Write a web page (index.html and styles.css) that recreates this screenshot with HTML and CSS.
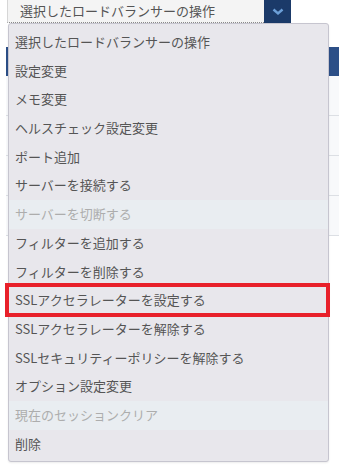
FILE: index.html
```html
<!DOCTYPE html>
<html lang="ja">
<head>
    <meta charset="UTF-8">
    <meta name="viewport" content="width=device-width, initial-scale=1.0">
    <title>ロードバランサーの操作</title>
    <link rel="stylesheet" href="styles.css">
</head>
<body>

    <div class="page">
        <div class="select-row">
            <div class="select-box">選択したロードバランサーの操作</div>
            <div class="select-btn">
                <svg width="12" height="8" viewBox="0 0 12 8">
                    <polyline points="1.5,1.5 6,5.5 10.5,1.5" fill="none" stroke="#6c9fd8" stroke-width="2.4"/>
                </svg>
            </div>
        </div>

        <div class="table">
            <div class="table-head"></div>
            <div class="table-row"></div>
            <div class="table-row"></div>
            <div class="table-row"></div>
            <div class="table-row"></div>
        </div>
    </div>

    <ul class="dropdown">
        <li class="item">選択したロードバランサーの操作</li>
        <li class="item">設定変更</li>
        <li class="item">メモ変更</li>
        <li class="item">ヘルスチェック設定変更</li>
        <li class="item">ポート追加</li>
        <li class="item">サーバーを接続する</li>
        <li class="item disabled">サーバーを切断する</li>
        <li class="item">フィルターを追加する</li>
        <li class="item">フィルターを削除する</li>
        <li class="item">SSLアクセラレーターを設定する</li>
        <li class="item">SSLアクセラレーターを解除する</li>
        <li class="item">SSLセキュリティーポリシーを解除する</li>
        <li class="item">オプション設定変更</li>
        <li class="item disabled">現在のセッションクリア</li>
        <li class="item">削除</li>
    </ul>

    <div class="highlight"></div>

</body>
</html>
```

FILE: styles.css
```css
* {
    box-sizing: border-box;
    margin: 0;
    padding: 0;
}
body {
    font-family: "Noto Sans CJK JP", "Noto Sans", sans-serif;
    font-size: 13px;
    color: #555;
    background-color: #ffffff;
    position: relative;
    width: 339px;
    height: 470px;
    overflow: hidden;
}
.page {
    padding-left: 6px;
}
.select-row {
    display: flex;
    height: 23px;
}
.select-box {
    width: 257px;
    margin-left: 1px;
    padding-left: 12px;
    background-color: #f4f4f4;
    border-left: 1px solid #d6d6d6;
    border-bottom: 1px dotted #8a8a8a;
    line-height: 21px;
    color: #555;
    white-space: nowrap;
}
.select-btn {
    width: 27px;
    height: 23px;
    background-color: #1b3a69;
    display: flex;
    align-items: center;
    justify-content: center;
}
.table {
    margin-top: 24px;
}
.table-head {
    height: 29px;
    background-color: #2c4f87;
}
.table-row {
    height: 40px;
    background-color: #f8f9fb;
    border-bottom: 1px solid #dcdfe4;
}
.dropdown {
    position: absolute;
    top: 23px;
    left: 8px;
    width: 321px;
    height: 439px;
    list-style: none;
    background-color: #e8e7ec;
    border: 1px solid #c6c5cf;
    border-radius: 3px;
    padding-top: 4px;
    box-shadow: 0 1px 2px rgba(0, 0, 0, 0.08);
}
.item {
    height: 28.7px;
    line-height: 28.7px;
    padding-left: 6px;
    white-space: nowrap;
}
.item.disabled {
    background-color: #e9edf1;
    color: #adadad;
}
.highlight {
    position: absolute;
    top: 283px;
    left: 5px;
    width: 325px;
    height: 34px;
    border: 4px solid #e8202a;
}
```
